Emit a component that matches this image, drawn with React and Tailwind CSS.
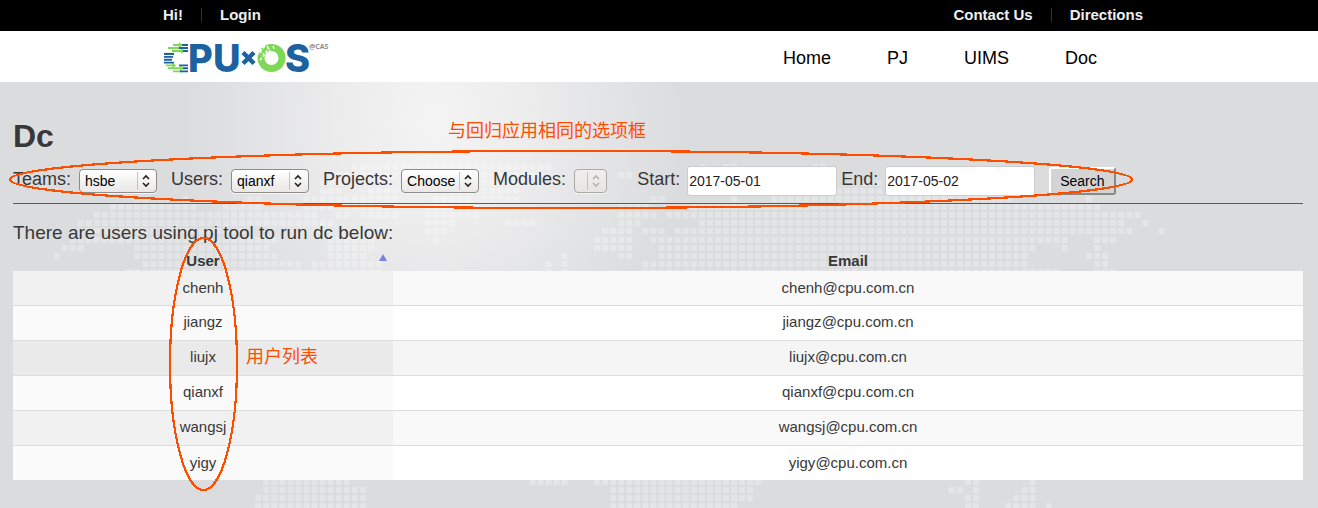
import React from 'react';

const PITCH = 8.066;
const ORIGIN_X = 110;

// Each entry: top of the row, then the [from, to] spans of land in it.
const LAND = [
  [164, [[352, 552], [699, 705], [723, 736], [812, 825]]],
  [172, [[336, 400], [480, 545], [618, 633]]],
  [180, [[320, 343], [480, 528], [860, 880]]],
  [188, [[318, 343], [368, 400], [480, 520], [837, 884]]],
  [196, [[135, 148], [182, 190], [247, 262], [300, 400], [433, 473], [482, 517], [651, 663], [731, 737], [772, 1010], [1086, 1092]]],
  [204, [[110, 200], [220, 262], [306, 392], [425, 470], [617, 650], [690, 1100]]],
  [212, [[94, 320], [336, 350], [360, 395], [425, 478], [618, 657], [667, 685], [691, 713], [715, 1140]]],
  [220, [[77, 330], [425, 453], [505, 535], [618, 640], [697, 1124], [1143, 1148]]],
  [228, [[77, 245], [425, 445], [602, 632], [643, 665], [675, 1132], [1159, 1164]]],
  [237, [[70, 280], [328, 375], [433, 438], [594, 630], [651, 1067], [1095, 1115]]],
  [245, [[61, 83], [134, 268], [328, 375], [594, 632], [659, 1035], [1062, 1068], [1094, 1100]]],
  [253, [[53, 58], [134, 275], [328, 370], [561, 567], [619, 632], [659, 1027], [1086, 1108]]],
  [261, [[142, 300], [312, 385], [546, 551], [562, 568], [643, 1027], [1094, 1108]]],
  [269, [[126, 380], [546, 551], [562, 568], [643, 1059], [1094, 1116]]],
  [479, [[262, 348], [529, 567], [594, 760], [965, 979], [1029, 1035]]],
  [487, [[262, 366], [610, 753], [949, 963], [973, 979], [1022, 1035]]],
  [495, [[254, 366], [610, 753], [965, 979], [1013, 1035]]],
  [503, [[254, 366], [610, 737], [965, 979], [1005, 1035], [1045, 1051]]],
];

const USERS = ['chenh', 'jiangz', 'liujx', 'qianxf', 'wangsj', 'yigy'];

function WorldMap() {
  return (
    <svg className="pointer-events-none absolute left-0 top-0 h-[508px] w-[1318px]" viewBox="0 0 1318 508" aria-hidden="true">
      {LAND.map(([y, spans]) =>
        spans.map(([from, to]) => {
          const first = Math.round((from - ORIGIN_X) / PITCH);
          const last = Math.round((to - 6 - ORIGIN_X) / PITCH);
          const x = ORIGIN_X + first * PITCH;
          return (
            <line
              key={`${y}-${from}`}
              x1={x}
              x2={ORIGIN_X + last * PITCH + 6}
              y1={y + 3}
              y2={y + 3}
              stroke="#fff"
              strokeOpacity="0.25"
              strokeWidth="6"
              strokeDasharray="6 2.066"
            />
          );
        })
      )}
    </svg>
  );
}

function Logo() {
  const blue = '#1d62a0';
  const green = '#7ed857';
  return (
    <svg className="h-[51px] w-[172px]" viewBox="0 -12 172 51" role="img" aria-label="CPU×OS @CAS">
      <g strokeWidth="1.9" fill="none">
        <path stroke={green} d="M10 2h9M5 5h13M9 8h11M3 10.800h7M3 22.400h9M9 25.300h9M5 25.300h12M10 28.400h9" />
        <path stroke={green} strokeWidth="1.400" d="M16 0l3 2l-3 2M18 6l3 2l-3 2M9 20.500l3 2l-3 2M17 23.300l3 2l-3 2" />
        <path stroke={blue} d="M19 2h6M16 5h9M20 8h5M1 11h10M1 13.900h9M1 16.800h8M1 19.600h10M16 22.400h9M20 25.300h5M17 28.400h8" />
      </g>
      <g fill={blue} fontFamily="Inter, sans-serif" fontWeight="800" fontSize="38">
        <text x="25" y="29">P</text>
        <text x="50" y="29">U</text>
        <text x="122" y="29">S</text>
      </g>
      <path d="M80 9.500L91 20.500M91 9.500L80 20.500" stroke={blue} strokeWidth="4.500" />
      <circle cx="108.500" cy="15" r="10.500" fill="none" stroke={green} strokeWidth="7" />
      <path d="M94 12l5-6l4-4M97 17l4-5l5-7M104 3l3 5M110 3l1 3M96 8l5 3" stroke="#fff" strokeWidth="1.500" strokeDasharray="3 1.500" fill="none" />
      <text x="146" y="6" fontFamily="Open Sans, sans-serif" fontWeight="700" fontSize="7" fill="#8d8d8d">@CAS</text>
    </svg>
  );
}

function Picker({ id, label, value, wide, disabled }) {
  return (
    <div className="flex items-center gap-2">
      <label htmlFor={id} className="pb-1">{label}</label>
      <div className="relative">
        <select
          id={id}
          defaultValue={value}
          disabled={disabled}
          className={
            'block h-6 appearance-none overflow-hidden rounded-[4px] border border-[#8f8d89] bg-gradient-to-b from-white to-[#e9e8e6] pl-[5px] pr-5 text-sm text-black shadow-[0_1px_0_#f5f5f5] disabled:border-[#aaa9a6] disabled:from-[#f0efee] disabled:to-[#e6e5e3] disabled:opacity-100 ' +
            (wide ? 'w-[78px]' : 'w-[33px]')
          }
        >
          <option>{value}</option>
        </select>
        <svg
          className={'pointer-events-none absolute right-0 top-0 h-6 w-5 ' + (disabled ? 'text-[#b4b3b1]' : 'text-[#222]')}
          viewBox="0 0 20 24"
          fill="none"
          aria-hidden="true"
        >
          <path d="M0.500 3v18" stroke="#c4c2be" />
          <path d="M6 10l3-3l3 3M6 14l3 3l3-3" stroke="currentColor" strokeWidth="1.600" />
        </svg>
      </div>
    </div>
  );
}

function DateField({ id, label, value }) {
  return (
    <div className="flex items-center gap-[7px]">
      <label htmlFor={id} className="pb-1">{label}</label>
      <input
        id={id}
        type="text"
        defaultValue={value}
        className="h-[30px] w-[150px] rounded-[3px] border border-[#ccc] bg-white px-px text-sm text-[#222]"
      />
    </div>
  );
}

export default function App() {
  return (
    <div className="relative flex min-h-screen flex-col bg-[#dbdcde] font-['Liberation_Sans',Arial,sans-serif] text-[#383838]">
      <div className="bg-black pb-px">
        <div className="mx-auto flex max-w-[992px] items-center justify-between pr-3 text-[15px] leading-[30px] font-bold text-[#eee]">
          <div className="flex items-center gap-[18px]">
            <span>Hi!</span>
            <span className="h-3.5 w-px bg-[#333]" />
            <a href="#login">Login</a>
          </div>
          <div className="flex items-center gap-[18px]">
            <a href="#contact">Contact Us</a>
            <span className="h-3.5 w-px bg-[#333]" />
            <a href="#directions">Directions</a>
          </div>
        </div>
      </div>
      <header className="bg-white">
        <div className="mx-auto flex h-[51px] max-w-[992px] items-center justify-between pr-[58px]">
          <Logo />
          <nav className="flex gap-14 pt-0.5 text-lg text-black">
            <a href="#home">Home</a>
            <a href="#pj">PJ</a>
            <a href="#uims">UIMS</a>
            <a href="#doc">Doc</a>
          </nav>
        </div>
      </header>

      <main className="flex-1 bg-[radial-gradient(ellipse_250px_280px_at_435px_40px,#f4f4f4_0%,#ececed_40%,#dbdcde_100%)] pl-[13px] pr-[15px] pt-9">
        <WorldMap />
        <div className="relative">
          <h1 className="text-[32px] leading-9 font-bold">Dc</h1>
          <form className="mt-2.5 flex flex-wrap items-center gap-x-3.5 border-b border-[#5a5b5c] pb-[5px] text-lg leading-[30px]" onSubmit={(e) => e.preventDefault()}>
            <Picker id="teams" label="Teams:" value="hsbe" wide />
            <Picker id="users" label="Users:" value="qianxf" wide />
            <Picker id="projects" label="Projects:" value="Choose" wide />
            <Picker id="modules" label="Modules:" value="" disabled />
            <div className="ml-4 flex items-center gap-1">
              <DateField id="start" label="Start:" value="2017-05-01" />
              <DateField id="end" label="End:" value="2017-05-02" />
            </div>
            <button type="submit" className="h-7 rounded-[3px] border-2 border-t-white border-r-[#888884] border-b-[#888884] border-l-white bg-[#d4d4d4] px-[9px] text-sm text-black">
              Search
            </button>
          </form>
          <p className="mt-[17px] text-[19px] leading-6">There are users using pj tool to run dc below:</p>

          <table className="mt-[5px] w-full table-fixed border-collapse text-center text-[15px]">
            <colgroup>
              <col className="w-[380px]" />
              <col />
            </colgroup>
            <thead>
              <tr className="h-[21px]">
                <th scope="col" className="relative p-0 leading-5 font-bold" aria-sort="ascending">
                  User
                  <svg className="absolute right-1.5 top-1 h-[7px] w-2" viewBox="0 0 8 7" aria-hidden="true">
                    <path d="M4 0l4 7H0z" fill="#7b80df" />
                  </svg>
                </th>
                <th scope="col" className="p-0 leading-5 font-bold">Email</th>
              </tr>
            </thead>
            <tbody>
              {USERS.map((name, i) => {
                const first = i === 2 ? 'bg-[#eaeaea]' : i % 2 === 0 ? 'bg-[#f1f1f1]' : 'bg-[#fafafa]';
                const second = i === 2 ? 'bg-[#f5f5f5]' : i % 2 === 0 ? 'bg-[#f9f9f9]' : 'bg-white';
                return (
                  <tr key={name} className="h-[35px] border-t border-[#ddd] first:h-[34px] first:border-t-0">
                    <td className={'p-0 ' + first}>{name}</td>
                    <td className={'p-0 ' + second}>{name}@cpu.com.cn</td>
                  </tr>
                );
              })}
            </tbody>
          </table>
        </div>
      </main>

      <svg className="pointer-events-none absolute left-0 top-0 h-[508px] w-[1318px]" viewBox="0 0 1318 508" fill="none" stroke="#ff4d00" strokeWidth="2.200" shapeRendering="crispEdges" aria-hidden="true">
        <ellipse cx="571" cy="179.500" rx="561" ry="28.500" />
        <ellipse cx="203.500" cy="364" rx="33.500" ry="126" />
      </svg>
      <span className="absolute left-[448px] top-[116px] font-['Noto_Sans_CJK_SC',sans-serif] text-lg leading-[26px] text-[#ff4d00]">与回归应用相同的选项框</span>
      <span className="absolute left-[246px] top-[342px] font-['Noto_Sans_CJK_SC',sans-serif] text-lg leading-[26px] text-[#ff4d00]">用户列表</span>
    </div>
  );
}
